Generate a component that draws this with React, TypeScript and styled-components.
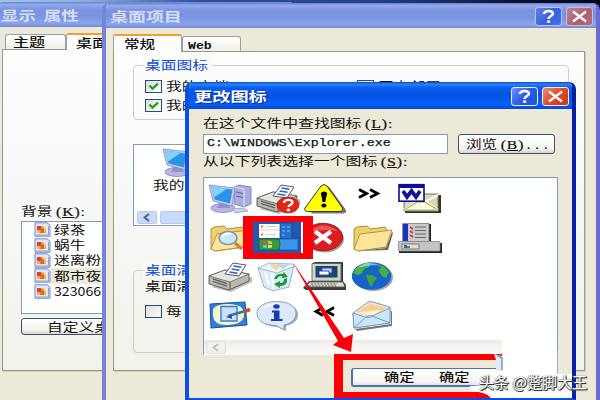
import React from "react";
import styled, { createGlobalStyle } from "styled-components";

const Global = createGlobalStyle`
  * { box-sizing: border-box; }
  body { margin: 0; background: #fff; }
`;

const Desktop = styled.main`
  position: relative;
  width: 600px;
  height: 400px;
  overflow: hidden;
  background: linear-gradient(90deg, #9cc6e8 0, #7fb2dc 90px, #2b4f9c 200px, #20408c 380px, #0c1230 520px, #05070f 100%);
  font-family: "Liberation Sans", "Noto Sans CJK SC", sans-serif;
`;

const Window = styled.section<{ $x: number; $y: number; $w: number; $h: number; $active?: boolean }>`
  position: absolute;
  isolation: isolate;
  left: ${(p) => p.$x}px;
  top: ${(p) => p.$y}px;
  width: ${(p) => p.$w}px;
  height: ${(p) => p.$h}px;
  display: flex;
  flex-direction: column;
  overflow: hidden;
  border-radius: 7px 7px 0 0;
  border: solid ${(p) => (p.$active ? "#0b4fe0" : "#7583dc")};
  border-width: 0 4px ${(p) => (p.$active ? 2 : 0)}px 4px;
  border-right-color: ${(p) => (p.$active ? "#0420a4" : "#6a6cd4")};
  background: #ece9d8;
`;

const TitleBar = styled.header<{ $active?: boolean; $h: number; $indent: number }>`
  flex: none;
  display: flex;
  align-items: center;
  gap: 4px;
  height: ${(p) => p.$h}px;
  margin: 0 -4px;
  padding: 1px 7px 0 ${(p) => p.$indent}px;
  background: ${(p) =>
    p.$active
      ? "linear-gradient(#0a46c8 0, #2a82f8 8%, #0a5cec 22%, #0453e2 50%, #0462fc 80%, #0348d4 100%)"
      : "linear-gradient(#6b7fd0 0, #93a9ec 10%, #7c93e0 30%, #7b95e0 60%, #88a6ea 85%, #7688da 100%)"};
`;

const Text = styled.span<{ $size?: number; $sx?: number; $color?: string; $weight?: number }>`
  display: block;
  flex: none;
  height: 16px;
  white-space: pre;
  line-height: 16px;
  font-family: "Noto Sans CJK SC", sans-serif;
  font-size: ${(p) => p.$size ?? 12}px;
  font-weight: ${(p) => p.$weight ?? 400};
  color: ${(p) => p.$color ?? "#111"};
  transform: scaleX(${(p) => p.$sx ?? 1.31});
  transform-origin: 0 50%;
`;

const Latin = styled.span`
  font-family: "Liberation Serif", serif;
  font-size: 12px;
  line-height: 1;
  letter-spacing: 0.7px;
  -webkit-text-stroke: 0.2px #111;
`;

const MonoBold = styled.span`
  font-family: "Liberation Mono", monospace;
  font-size: 11px;
  line-height: 1;
`;

const Title = styled(Text)<{ $active?: boolean }>`
  flex: 1;
  width: 60px;
  text-shadow: ${(p) => (p.$active ? "1px 1px 0 #0a2a8c" : "none")};
`;

const CaptionButton = styled.span<{ $bg: string; $edge: string }>`
  flex: none;
  display: flex;
  width: 27px;
  height: 19px;
  border: 1px solid ${(p) => p.$edge};
  border-radius: 3px;
  background: ${(p) => p.$bg};
  svg { width: 25px; height: 17px; }
`;

const TabStrip = styled.div<{ $left: number; $top: number }>`
  flex: none;
  display: flex;
  align-items: flex-end;
  height: ${(p) => p.$top}px;
  padding-left: ${(p) => p.$left}px;
`;

const Tab = styled.div<{ $w: number; $h: number; $selected?: boolean; $pad: number }>`
  flex: none;
  width: ${(p) => p.$w}px;
  height: ${(p) => p.$h}px;
  padding-left: ${(p) => p.$pad}px;
  display: flex;
  align-items: center;
  overflow: hidden;
  border: 1px solid #97a0a4;
  border-bottom: 0;
  border-top: ${(p) => (p.$selected ? "2px solid #f0a030" : "1px solid #97a0a4")};
  border-radius: 3px 3px 0 0;
  margin-bottom: ${(p) => (p.$selected ? -1 : 0)}px;
  z-index: ${(p) => (p.$selected ? 1 : 0)};
  background: ${(p) => (p.$selected ? "#fcfcfd" : "linear-gradient(#fff, #f0efe8)")};
`;

const TabPanel = styled.div<{ $x: number; $w: number; $h: number }>`
  flex: none;
  margin-left: ${(p) => p.$x}px;
  width: ${(p) => p.$w}px;
  height: ${(p) => p.$h}px;
  border: 1px solid #97998f;
  box-shadow: 1px 1px 0 #d2cfbd;
  background: linear-gradient(#fdfdfe, #f9f9f9 40%, #f2f1ea);
`;

const LeftContent = styled.div`
  display: flex;
  flex-direction: column;
  padding: 153px 0 0 18px;
`;

const FileList = styled.div`
  width: 150px;
  height: 93px;
  margin-top: 2px;
  padding: 0 0 0 11px;
  border: 1px solid #7f9db9;
  background: #fff;
`;

const FileRow = styled.div<{ $shade?: boolean }>`
  display: flex;
  align-items: center;
  gap: 3px;
  height: 15.4px;
  background: ${(p) => (p.$shade ? "linear-gradient(90deg, transparent 18px, #ece9d8 18px)" : "transparent")};
  svg { flex: none; width: 18px; height: 15px; }
`;

const PushButton = styled.div<{ $w: number; $h: number; $pad: number; $mt?: number }>`
  flex: none;
  width: ${(p) => p.$w}px;
  height: ${(p) => p.$h}px;
  margin-top: ${(p) => p.$mt ?? 0}px;
  padding-left: ${(p) => p.$pad}px;
  display: flex;
  align-items: center;
  border: 1.5px solid #2f5580;
  border-radius: 3px;
  background: linear-gradient(#fff, #f5f4ee 75%, #d9d5c9);
`;

const MiddleContent = styled.div`
  padding: 13px 15px 0 19px;
`;

const Group = styled.div<{ $h: number }>`
  height: ${(p) => p.$h}px;
  padding-left: 11px;
  border: 1px solid #d0d0bf;
  border-radius: 4px;
`;

const Legend = styled.div`
  width: 69px;
  height: 16px;
  margin: -9px 0 0 -2px;
  padding-left: 2px;
  background: #fafafb;
`;

const CheckRow = styled.div<{ $mt: number }>`
  display: flex;
  align-items: center;
  gap: 4px;
  height: 12px;
  margin-top: ${(p) => p.$mt}px;
`;

const CheckCell = styled.div`
  display: flex;
  align-items: center;
  gap: 4px;
  width: 208px;
`;

const CheckBox = styled.span`
  flex: none;
  display: flex;
  width: 17px;
  height: 13px;
  border: 1px solid #1d5182;
  background: linear-gradient(135deg, #dddcd4, #fff);
  svg { width: 15px; height: 11px; }
`;

const Preview = styled.div`
  display: flex;
  flex-direction: column;
  justify-content: space-between;
  height: 82px;
  margin: 24px 0 44px;
  border: 1px solid #7f9db9;
  background: #fff;
`;

const PreviewItem = styled.div`
  padding: 3px 0 0 19px;
  svg { display: block; width: 44px; height: 30px; margin: 0 0 -1px 9px; }
`;

const ScrollRow = styled.div`
  display: flex;
  gap: 3px;
  padding: 0 3px 1px;
`;

const ScrollButton = styled.span<{ $disabled?: boolean }>`
  display: flex;
  width: 20px;
  height: 13px;
  border: 1px solid ${(p) => (p.$disabled ? "#e2e0d8" : "#b6c8f4")};
  border-radius: 2px;
  background: ${(p) => (p.$disabled ? "#f1f0ea" : "#cbd9fb")};
  svg { width: 18px; height: 11px; }
`;

const ScrollThumb = styled(ScrollButton)`
  width: 180px;
`;

const DialogBody = styled.div`
  flex: 1;
  display: flex;
  flex-direction: column;
  padding: 6px 14px 0;
`;

const PathRow = styled.div`
  display: flex;
  gap: 10px;
  margin: 3px 0 -1px;
`;

const PathInput = styled.div`
  flex: none;
  width: 245px;
  height: 20px;
  padding: 0 0 0 3px;
  border: 1px solid #7f9db9;
  background: #fff;
  span { font-family: "Liberation Mono", monospace; -webkit-text-stroke: 0.25px #111; }
`;

const IconList = styled.div`
  flex: none;
  display: flex;
  flex-direction: column;
  justify-content: space-between;
  width: 355px;
  height: 178px;
  margin-top: 8px;
  border: 1px solid #7f9db9;
  background: #fff;
`;

const IconGrid = styled.div`
  display: grid;
  grid-template-columns: repeat(5, 47.6px);
  grid-auto-rows: 39px;
  padding: 6px 0 0 4px;
  svg { width: 44px; height: 30px; overflow: visible; }
`;

const ListScroll = styled.div`
  height: 16px;
  width: 298px;
  padding: 1px 2px;
  background: linear-gradient(#ecebe4, #f5f4f0 40%, #fbfbf9);
`;

const Patch = styled.div`
  position: absolute;
  left: 502px;
  top: 350px;
  width: 70px;
  height: 48px;
  background: linear-gradient(90deg, #fff 55px, #9bb0c2 55px, #9bb0c2 56px, #ece9d8 56px) 0 0 / 100% 24px no-repeat, #fff;
`;

const RedFrame = styled.div<{ $x: number; $y: number; $w: number; $h: number; $bw: string }>`
  position: absolute;
  left: ${(p) => p.$x}px;
  top: ${(p) => p.$y}px;
  width: ${(p) => p.$w}px;
  height: ${(p) => p.$h}px;
  border: solid #fb0006;
  border-width: ${(p) => p.$bw};
`;

const ConfirmFrame = styled(RedFrame)`
  padding: 8px 0 0 8px;
  background: #ece9d8;
`;

const ConfirmButton = styled.div`
  display: flex;
  align-items: center;
  width: 151px;
  height: 19px;
  padding-left: 31px;
  gap: 31px;
  border: 2px solid #4a74ae;
  border-right: 0;
  border-top-width: 1px;
  border-radius: 3px 0 0 3px;
  background: linear-gradient(#fff, #f6f5f2 80%, #dfe3ec);
`;

const Overlay = styled.svg`
  position: absolute;
  left: 0;
  top: 0;
`;

const Watermark = styled.div`
  position: absolute;
  left: 479px;
  top: 372px;
  font: 400 15px/20px "Noto Sans CJK SC", sans-serif;
  letter-spacing: 0.1px;
  white-space: pre;
  color: #fff;
  text-shadow: 1px 1px 0 #333, 1px 0 1px #444, 0 1px 1px #555, -1px 0 1px #aaa;
`;

const HelpGlyph = () => (
  <svg viewBox="0 0 25 17" fill="none" stroke="#fff" strokeWidth="2.5">
    <path d="M8 6C8 2 17 2 17 5.5C17 8 12.5 8 12.5 11" />
    <path d="M11 13.6h3.2" strokeWidth="2.2" />
  </svg>
);
const CloseGlyph = () => (
  <svg viewBox="0 0 25 17" fill="none" stroke="#fff" strokeWidth="2.4">
    <path d="M6 3.5L19 13.5M19 3.5L6 13.5" />
  </svg>
);
const Chevron = ({ color }: { color: string }) => (
  <svg viewBox="0 0 18 11" fill="none" stroke={color} strokeWidth="1.9">
    <path d="M11 2L6.5 5.5L11 9" />
  </svg>
);
const CaptionButtons = ({ active }: { active?: boolean }) => (
  <>
    <CaptionButton
      $edge={active ? "#e8eefc" : "#b6c4f2"}
      $bg={active ? "linear-gradient(135deg,#6c96f8,#2a5ce8 50%,#2452d8)" : "linear-gradient(135deg,#5f80e4,#3a62dc 55%,#4670e8)"}
    >
      <HelpGlyph />
    </CaptionButton>
    <CaptionButton
      $edge={active ? "#f6e6e4" : "#c8bce0"}
      $bg={active ? "linear-gradient(135deg,#f09078,#dc4a26 50%,#c83a14)" : "linear-gradient(135deg,#c08498,#b0606c 55%,#b46a78)"}
    >
      <CloseGlyph />
    </CaptionButton>
  </>
);
const Tick = () => (
  <svg viewBox="0 0 15 11" fill="none" stroke="#21a121" strokeWidth="2.3">
    <path d="M3.5 4.5L6.5 7.7L12 2.7" />
  </svg>
);
const PictureFile = () => (
  <svg viewBox="0 0 18 15">
    <path d="M2 .8h12l3 2.4v11H2z" fill="#dfe8fa" stroke="#6d86bd" />
    <rect x="4" y="4" width="9" height="7" fill="#f3b14a" />
    <path d="M4 4h4v4H4z" fill="#d8432a" />
    <path d="M8 5l3 2v4H7z" fill="#e4642c" />
    <path d="M10 4h3v4z" fill="#fbe08a" />
    <path d="M3 13h12.500v-9" fill="none" stroke="#8fa4cf" />
  </svg>
);

const Computer = () => (
  <svg viewBox="0 0 44 30">
    <path d="M26 3l5-2 12 2v17l-7 3-10-3z" fill="#a9addf" stroke="#7478b4" strokeWidth=".8" />
    <path d="M26 3l10 2v18" fill="none" stroke="#e5e7fa" />
    <path d="M28 8l7 1.500M28 12l7 1.500" stroke="#6066a4" />
    <ellipse cx="15" cy="24" rx="12" ry="4.500" fill="#b9b5e2" stroke="#8883bd" strokeWidth=".8" />
    <path d="M12 18h8l2 6H9z" fill="#8e92ca" />
    <path d="M1 1l26 3-3 18L5 17z" fill="#c9cdf0" stroke="#7e86c0" strokeWidth=".8" />
    <path d="M3 2.500l21.500 3-2.500 14L6.500 15.500z" fill="#2b93e4" />
    <path d="M3 2.500l16 2.200L6 13.500z" fill="#7fd2fa" />
    <path d="M24 25l12-1 4 3-13 2z" fill="#cfd0ee" stroke="#8a8cc4" strokeWidth=".7" />
  </svg>
);
const Printer = ({ help }: { help?: boolean }) => (
  <svg viewBox="0 0 44 30">
    <path d="M3 25l20 5 21-10v-5z" fill="#8d8d8d" opacity=".6" />
    <path d="M1 14L17 8l24 4v7L21 28 1 22z" fill="#b9b8b0" stroke="#444" strokeWidth=".8" />
    <path d="M1 14l16-6 24 4-19 8z" fill="#e6e5df" stroke="#555" strokeWidth=".7" />
    <path d="M22 20v8" stroke="#555" />
    <path d="M17 12L25 1l13 2-7 11z" fill="#fff" stroke="#445" strokeWidth=".9" />
    <path d="M25.500 4l8 1.300M23.500 7l8 1.300M21.500 10l8 1.300" stroke="#2d62c4" strokeWidth="1.4" />
    <path d="M5 17l14 4.500M5 19.500l14 4.500" stroke="#504f4a" strokeWidth="1.300" />
    {help && (
      <>
        <ellipse cx="32" cy="21" rx="11" ry="8" fill="#e32613" stroke="#a8130a" strokeWidth=".6" />
        <path d="M28 19c0-4 8.500-4 8.500-.6 0 2.400-4 2.200-4 4.600M30.800 26h3.200" fill="none" stroke="#fff" strokeWidth="2.300" />
      </>
    )}
  </svg>
);
const Warning = () => (
  <svg viewBox="0 0 44 30">
    <path d="M22 3q3-2 5 1l16 22q1 3-3 3.500H8z" fill="#777" />
    <path d="M18 2q3-3 6 0l15.500 22q1 3-3 3.500H4.500q-4-.5-2.500-3.500z" fill="#ffff00" stroke="#333" strokeWidth="1" />
    <path d="M17.800 9q3.200-3 6.400 0l-2 9h-2.600z" fill="#000" />
    <ellipse cx="20.900" cy="21.500" rx="2.600" ry="1.900" fill="#000" />
  </svg>
);
const DoubleArrow = ({ flip }: { flip?: boolean }) => (
  <svg viewBox="0 0 44 30" fill="none" stroke="#000" strokeWidth="2.800">
    {flip ? <path d="M20 6.500l-7 4 7 4M31 6.500l-7 4 7 4" /> : <path d="M8 5.500l7.500 4-7.500 4M19 5.500l7.500 4-7.500 4" />}
  </svg>
);
const WordMail = () => (
  <svg viewBox="0 0 44 30">
    <path d="M7 11h36v18H7z" fill="#333" />
    <path d="M6 10h34v17H6z" fill="#d9d8b4" stroke="#77775a" />
    <path d="M9 25l10-6h8l10 6z" fill="#fafad8" />
    <path d="M6 26l13-9h8l13 9M8 11l15 9 17-9" fill="none" stroke="#fbfbe4" strokeWidth="2.200" />
    <path d="M6 26l13-8h8l13 8" fill="none" stroke="#a3a23c" strokeWidth="1" />
    <rect x="1" y=".7" width="25" height="16.500" fill="#fff" stroke="#0b0b98" strokeWidth="1.600" />
    <path d="M1 1h25v3H1z" fill="#0b0b98" />
    <path d="M5 7l4 6 4.500-6 4.500 6 4-6" fill="none" stroke="#13139c" strokeWidth="3.800" />
  </svg>
);
const FolderBase = () => (
  <>
    <path d="M3 26V6l3-2 10-1 3 3 15-2 2 3v17L8 28z" fill="#f1cf6c" stroke="#a88431" strokeWidth=".9" />
    <path d="M3 26L9 11l32-4-6 17-28 4z" fill="#fbe59a" stroke="#b08d38" strokeWidth=".9" />
  </>
);
const SearchFolder = () => (
  <svg viewBox="0 0 44 30">
    <FolderBase />
    <path d="M27 20l7 6" stroke="#c98a3c" strokeWidth="3.500" />
    <ellipse cx="20" cy="15" rx="9" ry="6.500" fill="#c5eafa" stroke="#8391b0" strokeWidth="1.600" />
    <path d="M14 14q4-5 9-3" stroke="#fff" strokeWidth="2" fill="none" />
  </svg>
);
const Folder = () => (
  <svg viewBox="0 0 44 30">
    <path d="M8 28l27-3 6-16 1 1-5 17z" fill="#666" />
    <FolderBase />
  </svg>
);
const StartMenu = () => (
  <svg viewBox="0 0 44 30">
    <rect x="-3" y="-2" width="48" height="33" fill="#2457b0" />
    <path d="M3 1h21v14H3z" fill="#fbfbff" />
    <path d="M24 0h12v16H24z" fill="#2670d0" stroke="#0f3f94" strokeWidth=".7" />
    <path d="M3 7h20" stroke="#f3d48a" strokeWidth="1" />
    <path d="M5 3.500h2M5 11.500h2" stroke="#e05030" strokeWidth="1.500" />
    <path d="M10 3.500h11M10 11.500h9" stroke="#c6d0e8" strokeWidth="1.200" />
    <path d="M26 4h3M26 8h3M26 12h3M31 4h3M31 8h3" stroke="#5f9fe6" strokeWidth="1.400" />
    <path d="M23 16h19v11H23z" fill="#3b96ea" stroke="#17549f" strokeWidth=".7" />
    <path d="M3 16h17q4 0 4 5.500T20 27H3z" fill="#359c37" stroke="#166024" strokeWidth=".7" />
    <path d="M7 18.500l4-.7v3.200H7z" fill="#f05030" />
    <path d="M12 17.800l4 .6V21h-4z" fill="#9be060" />
    <path d="M7 22h4v3.200l-4-.7z" fill="#6fb8ff" />
    <path d="M12 22h4v2.500l-4 .7z" fill="#ffd850" />
  </svg>
);
const ErrorIcon = () => (
  <svg viewBox="0 0 44 30">
    <ellipse cx="22" cy="16" rx="19" ry="13.500" fill="#777" opacity=".7" />
    <ellipse cx="20" cy="14" rx="19.500" ry="13.700" fill="#dc1c20" stroke="#8c0e12" strokeWidth=".8" />
    <path d="M5 10Q18-4 35 8q-15-3-30 2z" fill="#f26a64" opacity=".75" />
    <path d="M12 8.500l16 11.500M28 8.500L12 20" stroke="#fff" strokeWidth="4.200" />
  </svg>
);
const StartPanel = () => (
  <svg viewBox="0 0 44 30">
    <path d="M6 1h27v19h11v10H1V19h5z" fill="#222" />
    <path d="M4.500.5H31V19H4.500z" fill="#c9c9c9" stroke="#777" strokeWidth=".8" />
    <path d="M5 1h5v17H5z" fill="#1830c8" />
    <path d="M12 4l3 2M12 8l3 2M12 12l3 2" stroke="#d03838" strokeWidth="1.600" />
    <path d="M17 4h11M17 7.500h11M17 11h11M17 14.500h11" stroke="#666" strokeWidth="1.200" />
    <path d="M.5 18.500H42V28H.5z" fill="#c3c3c3" stroke="#888" strokeWidth=".8" />
    <path d="M4 21h17v5H4z" fill="#ddd" stroke="#666" strokeWidth=".8" />
    <path d="M6 22h3v3H6z" fill="#2468c0" />
    <path d="M9 23h3v2H9z" fill="#3c9b34" />
  </svg>
);
const RecycleBin = () => (
  <svg viewBox="0 0 44 30">
    <path d="M2 6l36-3-5 22-16 4-9-4z" fill="#dcebf8" stroke="#8fabc9" strokeWidth=".9" />
    <path d="M2 6l11-5 23 1 3 2-18 7z" fill="#eef5fb" stroke="#8fabc9" strokeWidth=".8" />
    <path d="M13 2l7 7 7-7z" fill="#ecdca0" />
    <path d="M22 3l12-1-7 5z" fill="#b8d2ee" />
    <path d="M9 10l4 13M16 11l1 15" stroke="#fff" strokeWidth="2" />
    <path d="M18 17q2-6 9-5l1-2 4 5-6 1v-2q-4 0-5 3zM31 16q1 8-7 8v2l-6-4 6-3v2q4 0 4-4z" fill="#1c9c34" />
  </svg>
);
const ClassicPc = () => (
  <svg viewBox="0 0 44 30">
    <path d="M10 1l2-1h28v19l3 4v5H3l-3-2 6-7h4z" fill="#393d3a" />
    <path d="M9 1.500h29V19H9z" fill="#d2d4cc" stroke="#555" strokeWidth=".8" />
    <path d="M12.500 4h22v11.500h-22z" fill="#174a5c" />
    <path d="M19 6h10v5H19z" fill="#cdd7ff" stroke="#2e48d0" />
    <path d="M16 9h10v4H16z" fill="#fff" stroke="#2e48d0" />
    <path d="M7 20h33l2 5H2z" fill="#e0dfd5" stroke="#555" strokeWidth=".8" />
    <path d="M8 22h26M6 24h27" stroke="#555" strokeDasharray="2 1.200" />
  </svg>
);
const Globe = () => (
  <svg viewBox="0 0 44 30">
    <ellipse cx="22.500" cy="15.500" rx="19.500" ry="13.500" fill="#737b88" opacity=".7" />
    <ellipse cx="20.500" cy="14" rx="19.700" ry="13.700" fill="#1863c8" />
    <path d="M2 11Q7 1 20 .5L18 5l-5 2-2 4-4 2z" fill="#49b53c" />
    <path d="M15 13l6 0 5 3-3 4-3 5-3-6z" fill="#3fa83a" />
    <path d="M25 2q10 2 13 8l-3 6-4-2-4-6 3-2z" fill="#46b03c" />
    <path d="M6 6Q16-2 28 3q-12 0-22 3z" fill="#bfe6ff" opacity=".6" />
  </svg>
);
const RunIcon = () => (
  <svg viewBox="0 0 44 30">
    <path d="M2 3l35-2 2 23-36 3z" fill="#2f7fd6" stroke="#154f9b" />
    <path d="M5 8q4-5 15-5 16 0 16 10 0 11-18 11Q6 24 5 15z" fill="#f8f3cc" />
    <path d="M13 5.500h16V20H13z" fill="#c7e2fa" stroke="#347fc7" strokeWidth="1.400" />
    <path d="M20 15l19-5.500" stroke="#3d6fa9" strokeWidth="2.400" />
    <path d="M36 10.500l6-2" stroke="#c2502b" strokeWidth="3.600" />
    <path d="M18 16l6-3v5z" fill="#2a5b9b" />
  </svg>
);
const InfoIcon = () => (
  <svg viewBox="0 0 44 30">
    <path d="M23 1.500c11 0 19 5 19 12 0 6-5 10-12 11.500v5L22 26C10 26 4 21 4 14z" fill="#777" opacity=".65" />
    <path d="M20.500.5C32 .5 40 5 40 12s-6 11-12 12v5l-8-4.500C8 24.500 1 19.500 1 12.500S9 .5 20.500.5z" fill="#dbe9fb" stroke="#7a97c4" strokeWidth=".9" />
    <path d="M4 10Q12 0 26 3q-14 0-22 7z" fill="#fff" />
    <ellipse cx="20.500" cy="5.500" rx="3.200" ry="2.200" fill="#1737b4" />
    <path d="M16 9.500h7.500v8.500h3v2H15v-2h3v-6.500h-2z" fill="#1737b4" />
  </svg>
);
const Envelope = () => (
  <svg viewBox="0 0 44 30">
    <path d="M4 28l36-5V10l1 0v15L6 30z" fill="#777" />
    <path d="M2 12L17 1q3-1 5 0l17 5v16L3 27z" fill="#e9e4d9" stroke="#8590ad" strokeWidth=".9" />
    <path d="M6 11L19 3l17 4-14 7z" fill="#f8cf8a" />
    <path d="M8 11l22-2-9 6z" fill="#fff3d0" />
    <path d="M2 12l15 5 22-10v15L3 27z" fill="#c9e7fb" stroke="#7b93bd" strokeWidth=".9" />
    <path d="M3 27l12-11q3-2 6-1l18 7" fill="none" stroke="#7b93bd" />
  </svg>
);

const files = ["绿茶", "蜗牛", "迷离粉", "都市夜", "323066"];

export default function App() {
  return (
    <>
      <Global />
      <Desktop>
        <Window $x={-4} $y={2} $w={300} $h={400}>
          <TitleBar $h={25} $indent={5}>
            <Title $size={13} $sx={1.34} $weight={700} $color="#d4dff8">显示  属性</Title>
          </TitleBar>
          <TabStrip $left={5} $top={22}>
            <Tab $w={61} $h={15} $pad={7}><Text $sx={1.34} $weight={500}>主题</Text></Tab>
            <Tab $w={70} $h={17} $pad={9} $selected><Text $sx={1.34} $weight={500}>桌面</Text></Tab>
          </TabStrip>
          <TabPanel $x={2} $w={300} $h={322}>
            <LeftContent>
              <Text>背景 <Latin>(<u>K</u>):</Latin></Text>
              <FileList>
                {files.map((f, i) => (
                  <FileRow key={f} $shade={i === 3}>
                    <PictureFile />
                    <Text $sx={i === 4 ? 1.18 : 1.31}>{f}</Text>
                  </FileRow>
                ))}
              </FileList>
              <PushButton $w={150} $h={17} $pad={25} $mt={4}><Text>自定义桌面</Text></PushButton>
            </LeftContent>
          </TabPanel>
        </Window>

        <Window $x={102} $y={3} $w={498} $h={400}>
          <TitleBar $h={25} $indent={8}>
            <Title $size={13} $sx={1.38} $weight={700} $color="#d4dff8">桌面项目</Title>
            <CaptionButtons />
          </TitleBar>
          <TabStrip $left={7} $top={23}>
            <Tab $w={69} $h={18} $pad={10} $selected><Text $sx={1.3} $weight={500}>常规</Text></Tab>
            <Tab $w={59} $h={15} $pad={5}><Text $sx={1.2} $weight={700}><MonoBold>Web</MonoBold></Text></Tab>
          </TabStrip>
          <TabPanel $x={7} $w={472} $h={320}>
            <MiddleContent>
              <Group $h={55}>
                <Legend><Text $color="#0c4bcf">桌面图标</Text></Legend>
                <CheckRow $mt={7}>
                  <CheckCell>
                    <CheckBox><Tick /></CheckBox>
                    <Text>我的文档</Text>
                  </CheckCell>
                  <CheckCell>
                    <CheckBox />
                    <Text>网上邻居</Text>
                  </CheckCell>
                </CheckRow>
                <CheckRow $mt={7}>
                  <CheckBox><Tick /></CheckBox>
                  <Text>我的电脑</Text>
                </CheckRow>
              </Group>
              <Preview>
                <PreviewItem>
                  <Computer />
                  <Text>我的电脑</Text>
                </PreviewItem>
                <ScrollRow>
                  <ScrollButton><Chevron color="#4d6185" /></ScrollButton>
                  <ScrollThumb />
                </ScrollRow>
              </Preview>
              <Group $h={83}>
                <Legend><Text $color="#0c4bcf">桌面清理</Text></Legend>
                <Text $sx={1.31}>桌面清理</Text>
                <CheckRow $mt={11}>
                  <CheckBox />
                  <Text>每</Text>
                </CheckRow>
              </Group>
            </MiddleContent>
          </TabPanel>
        </Window>

        <Window $active $x={185} $y={82} $w={391} $h={318}>
          <TitleBar $active $h={27} $indent={9}>
            <Title $active $size={13} $sx={1.4} $weight={700} $color="#fff">更改图标</Title>
            <CaptionButtons active />
          </TitleBar>
          <DialogBody>
            <Text $sx={1.32}>在这个文件中查找图标 <Latin>(<u>L</u>):</Latin></Text>
            <PathRow>
              <PathInput><Text $size={11.5} $sx={1.157}>C:\WINDOWS\Explorer.exe</Text></PathInput>
              <PushButton $w={97} $h={20} $pad={7}>
                <Text $sx={1.3}>浏览 <Latin>(<u>B</u>)</Latin><MonoBold>...</MonoBold></Text>
              </PushButton>
            </PathRow>
            <Text $sx={1.32}>从以下列表选择一个图标 <Latin>(<u>S</u>):</Latin></Text>
            <IconList>
              <IconGrid>
                <Computer /><Printer help /><Warning /><DoubleArrow /><WordMail />
                <SearchFolder /><StartMenu /><ErrorIcon /><Folder /><StartPanel />
                <Printer /><RecycleBin /><ClassicPc /><Globe /><span />
                <RunIcon /><InfoIcon /><DoubleArrow flip /><Envelope />
              </IconGrid>
              <ListScroll><ScrollButton $disabled><Chevron color="#c4c2ba" /></ScrollButton></ListScroll>
            </IconList>
          </DialogBody>
        </Window>

        <Patch />
        <RedFrame $x={243} $y={216} $w={70} $h={43} $bw="6px 10px" />
        <ConfirmFrame $x={334} $y={354} $w={168} $h={44} $bw="6px 0 6px 9px">
          <ConfirmButton>
            <Text $sx={1.27} $weight={500}>确定</Text>
            <Text $sx={1.27} $weight={500}>确定</Text>
          </ConfirmButton>
        </ConfirmFrame>
        <Overlay width="600" height="400" viewBox="0 0 600 400">
          <path d="M292 261L344 338L353 334L351 352L333 345L338 341Z" fill="#fb0006" />
          <path d="M494 354L502 356V371H496V360Z" fill="#dfeaf2" />
          <path d="M497 355L502 358V370" fill="none" stroke="#7898b8" strokeWidth="1.500" />
          <path d="M470 386L502 384V398H491Q487 392 470 391Z" fill="#fff" />
        </Overlay>
        <Watermark>头条 @蹩脚大王</Watermark>
      </Desktop>
    </>
  );
}
